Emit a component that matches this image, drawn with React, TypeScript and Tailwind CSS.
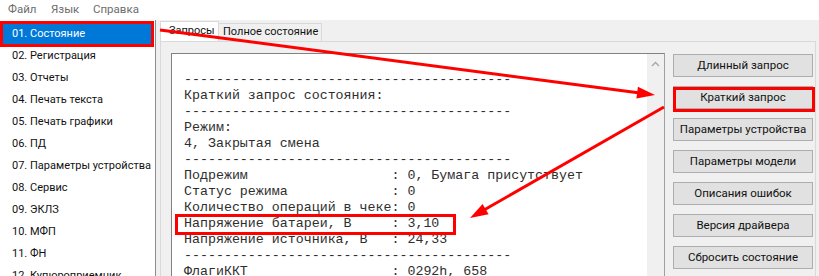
import React from 'react';

const DASH = '-'.repeat(41);

const row = (label: string, value: string) => label.padEnd(26) + ': ' + value;

const memoLines = [
  '',
  DASH,
  'Краткий запрос состояния:',
  DASH,
  'Режим:',
  '4, Закрытая смена',
  DASH,
  row('Подрежим', '0, Бумага присутствует'),
  row('Статус режима', '0'),
  row('Количество операций в чеке', '0'),
  row('Напряжение батареи, В', '3,10'),
  row('Напряжение источника, В', '24,33'),
  DASH,
  row('ФлагиККТ', '0292h, 658'),
];

const sections = [
  '01. Состояние',
  '02. Регистрация',
  '03. Отчеты',
  '04. Печать текста',
  '05. Печать графики',
  '06. ПД',
  '07. Параметры устройства',
  '08. Сервис',
  '09. ЭКЛЗ',
  '10. МФП',
  '11. ФН',
  '12. Купюроприемник',
];

const actions = [
  'Длинный запрос',
  'Краткий запрос',
  'Параметры устройства',
  'Параметры модели',
  'Описания ошибок',
  'Версия драйвера',
  'Сбросить состояние',
];

// red annotation marks drawn on top of the screenshot
const Annotations = () => (
  <svg
    className="absolute inset-0 pointer-events-none"
    width={819}
    height={276}
    viewBox="0 0 819 276"
  >
    <g fill="none" stroke="#ff0000" strokeWidth={3}>
      <rect x={1.5} y={22.5} width={151} height={23} />
      <rect x={674.5} y={88.5} width={139} height={22} />
      <rect x={176.5} y={215.5} width={278} height={18} />
      <line x1={160} y1={30} x2={640} y2={93} />
      <line x1={664} y1={107} x2={484} y2={210} />
    </g>
    <g fill="#ff0000">
      <polygon points="655,95 636.4,98.6 637.9,86.7" />
      <polygon points="470,218 482.6,203.9 488.6,214.3" />
    </g>
  </svg>
);

export default function App() {
  return (
    <div className="relative w-[819px] h-[276px] overflow-hidden bg-[#f0f0f0] flex flex-col font-['Roboto',Arial,sans-serif] text-[11px] text-[#111]">
      {/* menu bar */}
      <div className="h-[20px] flex-none bg-white flex items-center pl-[8px] text-[11.5px] text-[#6d6d6d]">
        <span className="w-[43px]">Файл</span>
        <span className="w-[42px]">Язык</span>
        <span>Справка</span>
      </div>

      <div className="flex flex-1 min-h-0">
        {/* sections list */}
        <ul className="w-[156px] flex-none bg-white border-r border-[#8c8c8c] pt-[3px]">
          {sections.map((s, i) => (
            <li
              key={s}
              className={`h-[22px] mx-[2px] pl-[10px] flex items-center whitespace-nowrap ${
                i === 0 ? 'bg-[#0078d7] text-white' : ''
              }`}
            >
              {s}
            </li>
          ))}
        </ul>

        {/* tabs */}
        <div className="flex-1 flex flex-col ml-[4px] pt-[1px] pr-[3px] min-w-0">
          <div className="h-[20px] flex items-end flex-none whitespace-nowrap">
            <div className="w-[59px] h-[20px] bg-white border border-b-0 border-[#d9d9d9] pl-[8px] flex items-center">
              Запросы
            </div>
            <div className="w-[103px] h-[18px] border border-l-0 border-b-0 border-[#d9d9d9] pl-[4px] flex items-center">
              Полное состояние
            </div>
          </div>

          <div className="flex-1 flex border-l border-t border-r border-[#d9d9d9] pl-[10px] pt-[11px] pr-[2px]">
            {/* memo */}
            <div className="w-[494px] h-[260px] flex-none flex bg-white border-l border-t border-[#828282] border-r-[#a0a0a0] border-r">
              <pre className="flex-1 pl-[12px] pt-[2px] font-['Liberation_Mono','Courier_New',monospace] text-[13.3px] leading-[16px] text-[#2e2e2e]">
                {memoLines.join('\n')}
              </pre>
              <div className="w-[17px] flex-none bg-[#f0f0f0] flex justify-center pt-[7px]">
                <svg width={9} height={6} viewBox="0 0 9 6">
                  <polyline points="1,5 4.5,1.5 8,5" fill="none" stroke="#a6a6a6" strokeWidth={1.3} />
                </svg>
              </div>
            </div>

            {/* buttons */}
            <div className="w-[140px] flex-none ml-[8px] pt-[1px] flex flex-col gap-[9px]">
              {actions.map((a) => (
                <button
                  key={a}
                  className="h-[23px] bg-[#e1e1e1] border border-[#adadad] flex items-center justify-center whitespace-nowrap text-[11.5px]"
                >
                  {a}
                </button>
              ))}
            </div>
          </div>
        </div>
      </div>

      <Annotations />
    </div>
  );
}
